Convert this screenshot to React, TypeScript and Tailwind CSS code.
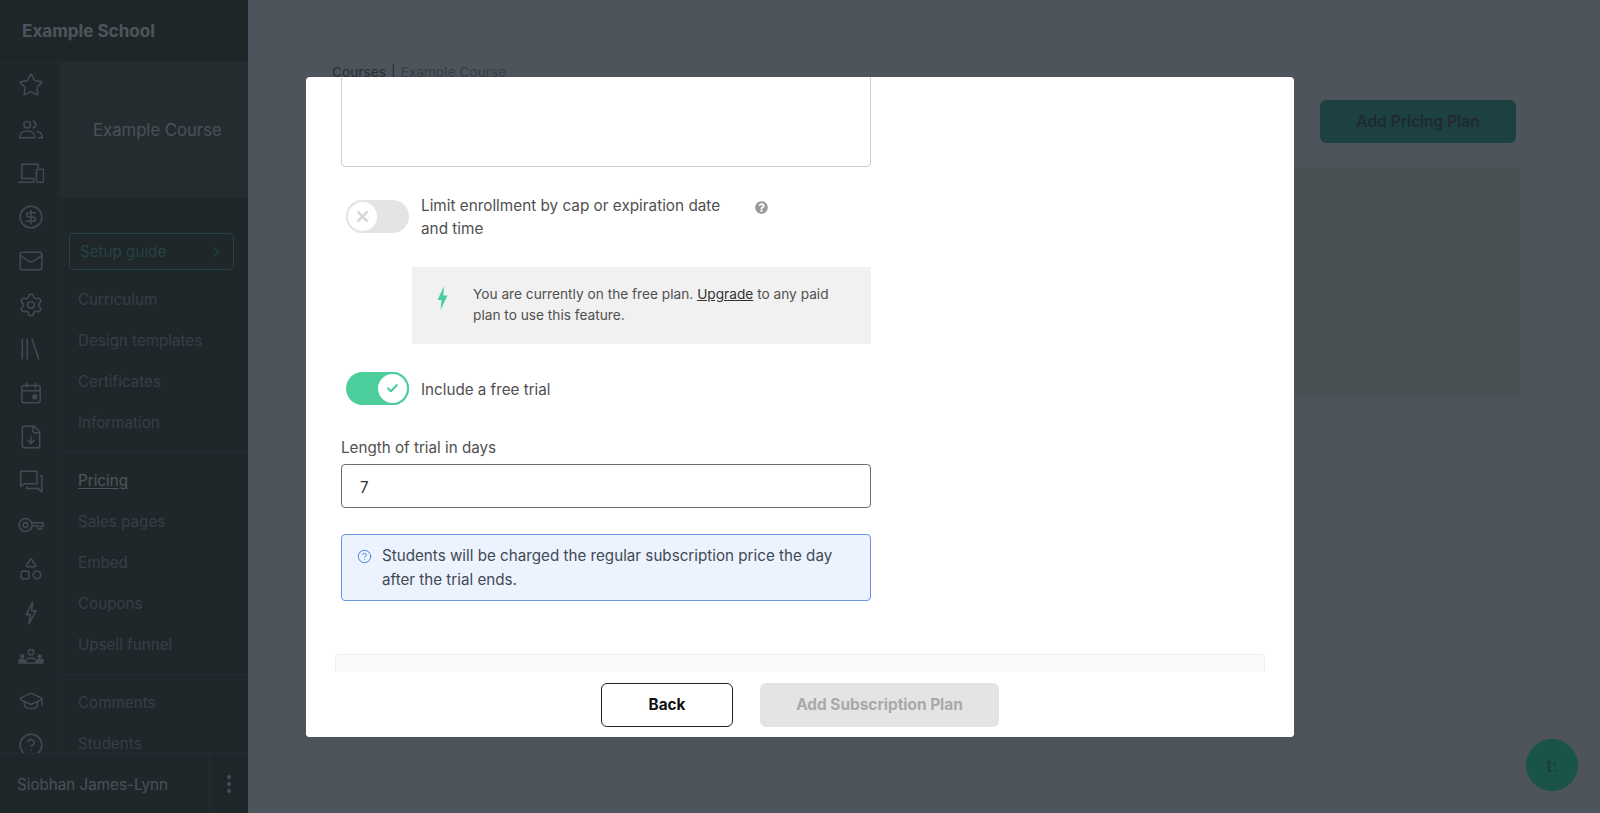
import { Check, ChevronRight, CircleDollarSign, CircleHelp, FileDown, GraduationCap, Mail, Settings, Shapes, Star, X } from 'lucide-react';
import { FaQuestionCircle } from 'react-icons/fa';
import type { ReactNode } from 'react';

const font = { fontFamily: 'Inter, "Liberation Sans", sans-serif' };

function Svg({ children }: { children: ReactNode }) {
  return (
    <svg viewBox="0 0 24 24" className="w-[26px] h-[26px]" fill="none" stroke="currentColor" strokeWidth="1.4" strokeLinecap="round" strokeLinejoin="round">
      {children}
    </svg>
  );
}

const railIcons: ReactNode[] = [
  <Star key="star" size={26} strokeWidth={1.4} />,
  <Svg key="people">
    <circle cx="8.500" cy="8" r="3" />
    <path d="M1.500 20c0-4 3-6.200 7-6.200s7 2.200 7 6.200z" />
    <path d="M14 4.900a3.200 3.200 0 0 1 0 6.200M17.500 14c2.800.7 5 2.800 5 6h-3.500" />
  </Svg>,
  <Svg key="devices">
    <path d="M3.500 17V4h15v3" />
    <path d="M0.500 20.500h14v-3.500H3.500" />
    <rect x="17" y="8.500" width="6.500" height="12" rx="1" />
  </Svg>,
  <CircleDollarSign key="dollar" size={26} strokeWidth={1.4} />,
  <Mail key="mail" size={26} strokeWidth={1.4} />,
  <Settings key="gear" size={26} strokeWidth={1.4} />,
  <Svg key="library">
    <path d="M4 3v18M8.500 3v18M13 3l6 18" />
  </Svg>,
  <Svg key="calendar">
    <rect x="3.500" y="5" width="17" height="16" rx="2" />
    <path d="M3.500 10h17M8 3v4M16 3v4" />
    <rect x="14" y="14" width="3" height="3" fill="currentColor" />
  </Svg>,
  <FileDown key="file" size={26} strokeWidth={1.4} />,
  <Svg key="chat">
    <path d="M2.500 3h15v11.500H6L2.500 17z" />
    <path d="M20.500 7.500h1.500V22l-3.500-3H8v-1.500" />
  </Svg>,
  <Svg key="key">
    <circle cx="7" cy="12" r="6" />
    <circle cx="7" cy="12" r="2.200" />
    <path d="M13 10h10.500v3h-2v3h-3v-3H13" />
  </Svg>,
  <Shapes key="shapes" size={26} strokeWidth={1.4} />,
  <Svg key="bolt">
    <path d="M13.500 2 7.500 13.500h4L10 22l6.500-12h-4z" />
  </Svg>,
  <Svg key="team">
    <circle cx="12" cy="7.500" r="2.500" />
    <path d="M7 17.500c0-3 2.200-4.500 5-4.500s5 1.500 5 4.500z" />
    <circle cx="4" cy="11.500" r="1.300" fill="currentColor" />
    <circle cx="20" cy="11.500" r="1.300" fill="currentColor" />
    <path d="M1 17.500v-3h5v3zM18 17.500v-3h5v3z" fill="currentColor" />
  </Svg>,
  <GraduationCap key="grad" size={26} strokeWidth={1.4} />,
  <CircleHelp key="help" size={26} strokeWidth={1.4} />,
];

function NavItem({ label, active }: { label: string; active?: boolean }) {
  return (
    <div className={`h-[41px] flex items-center pl-[18px] text-[15.200px] ${active ? 'text-white underline underline-offset-2' : 'text-[#8a959b]'}`}>
      {label}
    </div>
  );
}

function Sidebar() {
  return (
    <aside className="w-[248px] h-full shrink-0 flex flex-col bg-[#1a1f0a]">
      <div className="h-[62px] shrink-0 flex items-center pl-[22px] text-white text-[17.100px] font-bold bg-[#141a04] border-b border-[#2c3638]">
        Example School
      </div>
      <div className="flex-1 flex overflow-hidden">
        <div className="w-[60px] shrink-0 flex flex-col items-center pl-[3px] pt-[1px] text-[#c9ced0] border-r border-[#262e2a]">
          {railIcons.map((icon, i) => (
            <div key={i} className="h-[44px] shrink-0 flex items-center justify-center">{icon}</div>
          ))}
        </div>
        <div className="flex-1 flex flex-col overflow-hidden">
          <div className="h-[136px] shrink-0 flex items-center pl-[33px] pt-[2px] text-[16.700px] text-[#e8eaeb] bg-[#33392a]">
            Example Course
          </div>
          <div className="mt-[35px] ml-[9px] w-[165px] h-[37px] shrink-0 flex items-center justify-between pl-[10px] pr-[8px] border border-[#2fa880] rounded text-[15.200px] text-[#2fa880]">
            <span className="mt-[1px]">Setup guide</span>
            <ChevronRight size={18} strokeWidth={1.5} />
          </div>
          <div className="mt-[10px] pb-[7px] border-b border-[#34403f] shrink-0">
            <NavItem label="Curriculum" />
            <NavItem label="Design templates" />
            <NavItem label="Certificates" />
            <NavItem label="Information" />
          </div>
          <div className="mt-[9px] pb-[8px] border-b border-[#34403f] shrink-0">
            <NavItem label="Pricing" active />
            <NavItem label="Sales pages" />
            <NavItem label="Embed" />
            <NavItem label="Coupons" />
            <NavItem label="Upsell funnel" />
          </div>
          <div className="mt-[8px] shrink-0">
            <NavItem label="Comments" />
            <NavItem label="Students" />
          </div>
        </div>
      </div>
      <div className="h-[60px] shrink-0 flex border-t border-[#34403f] text-[#e2e5e6]">
        <div className="w-[210px] flex items-center pl-[17px] pt-[3px] text-[15.200px] border-r border-[#34403f]">Siobhan James-Lynn</div>
        <div className="flex-1 flex flex-col items-center justify-center gap-[3px]">
          <span className="w-[4px] h-[4px] rounded-full bg-current" />
          <span className="w-[4px] h-[4px] rounded-full bg-current" />
          <span className="w-[4px] h-[4px] rounded-full bg-current" />
        </div>
      </div>
    </aside>
  );
}

function Toggle({ on }: { on?: boolean }) {
  return (
    <div className={`w-[63px] h-[33px] shrink-0 rounded-full flex ${on ? 'bg-[#4bce9b] justify-end' : 'bg-[#e4e4e4] justify-start'}`}>
      <div className={`w-[33px] h-[33px] rounded-full bg-white border-2 flex items-center justify-center ${on ? 'border-[#4bce9b] text-[#4bce9b]' : 'border-[#e4e4e4] text-[#d8d8d8]'}`}>
        {on ? <Check size={13} strokeWidth={4} /> : <X size={17} strokeWidth={3.500} />}
      </div>
    </div>
  );
}

function Modal() {
  return (
    <div className="w-[988px] h-[660px] bg-white rounded flex flex-col overflow-hidden text-[#505050]">
      <div className="flex-1 overflow-hidden px-[29px]">
        <div className="ml-[6px] w-[530px]">
          <div className="-mt-[12px] h-[102px] border border-[#cfcfcf] rounded" />
          <div className="mt-[27px] flex items-start">
            <div className="ml-[5px] mt-[6px]"><Toggle /></div>
            <p className="ml-[12px] w-[310px] text-[15.300px] leading-[23px]">Limit enrollment by cap or expiration date and time</p>
            <FaQuestionCircle className="ml-[24px] mt-[7px] text-[#999999]" size={13} />
          </div>
          <div className="mt-[27px] ml-[71px] h-[77px] bg-[#f1f1f1] flex items-start pt-[17px]">
            <svg viewBox="0 0 12 24" className="ml-[23px] mt-[2px] w-[15px] h-[24px] shrink-0 text-[#4bce9b]" fill="currentColor">
              <path d="M7.500 0 1 14h4l-1 10 7-14.500H6.800z" />
            </svg>
            <p className="ml-[23px] w-[365px] text-[13.700px] leading-[21px]">
              You are currently on the free plan. <span className="underline text-[#333333]">Upgrade</span> to any paid plan to use this feature.
            </p>
          </div>
          <div className="mt-[28px] flex items-center">
            <div className="ml-[5px]"><Toggle on /></div>
            <span className="ml-[12px] text-[15.200px] mt-[4px]">Include a free trial</span>
          </div>
          <div className="mt-[31px] text-[15.200px] leading-[23px]">Length of trial in days</div>
          <div className="mt-[5px] h-[44px] border border-[#6e6e6e] rounded flex items-center pl-[18px] pt-[5px] text-[15.200px] text-[#333333]">7</div>
          <div className="mt-[26px] h-[67px] border border-[#6a93dd] rounded bg-[#edf3fe] flex items-start pl-[15px] pt-[9px] text-[#3f4a55]">
            <CircleHelp size={15} strokeWidth={1.600} className="mt-[5px] shrink-0 text-[#4f82dd]" />
            <p className="ml-[10px] w-[480px] text-[15.200px] leading-[24px]">Students will be charged the regular subscription price the day after the trial ends.</p>
          </div>
        </div>
        <div className="mt-[53px] h-[80px] border border-[#eeeeee] rounded bg-[#fafafa]" />
      </div>
      <div className="h-[65px] shrink-0 bg-white flex items-start pl-[295px] pt-[11px] gap-[27px]">
        <button className="w-[132px] h-[44px] pt-[1px] rounded-md border border-[#222222] text-[15.300px] font-bold text-[#111111]">Back</button>
        <button className="w-[239px] h-[44px] rounded-md bg-[#e4e4e4] text-[15.400px] font-bold text-[#a9a9a9]">Add Subscription Plan</button>
      </div>
    </div>
  );
}

export default function App() {
  return (
    <div className="relative h-screen w-full flex overflow-hidden bg-white" style={font}>
      <Sidebar />
      <main className="flex-1 px-[84px] pt-[62px]">
        <div className="h-[20px] flex items-center text-[13.700px] text-[#3a3f44]">
          Courses<span className="mx-[5px]">|</span><span className="text-[#8d959b]">Example Course</span>
        </div>
        <div className="mt-[18px] flex justify-end">
          <button className="w-[196px] h-[43px] rounded-md bg-[#0c9f77] text-[15.500px] font-semibold text-[#1f2a2f]">Add Pricing Plan</button>
        </div>
        <div className="mt-[24px] -mr-[4px] h-[230px] bg-[#eeeee2]" />
      </main>
      <div className="absolute inset-0 bg-[#202932]/80 flex items-center justify-center">
        <Modal />
      </div>
      <div className="absolute right-[22px] bottom-[22px] w-[52px] h-[52px] rounded-full bg-[#1a5448] flex items-center justify-center text-[#1f3a3c] text-[18px]">
        t:
      </div>
    </div>
  );
}
